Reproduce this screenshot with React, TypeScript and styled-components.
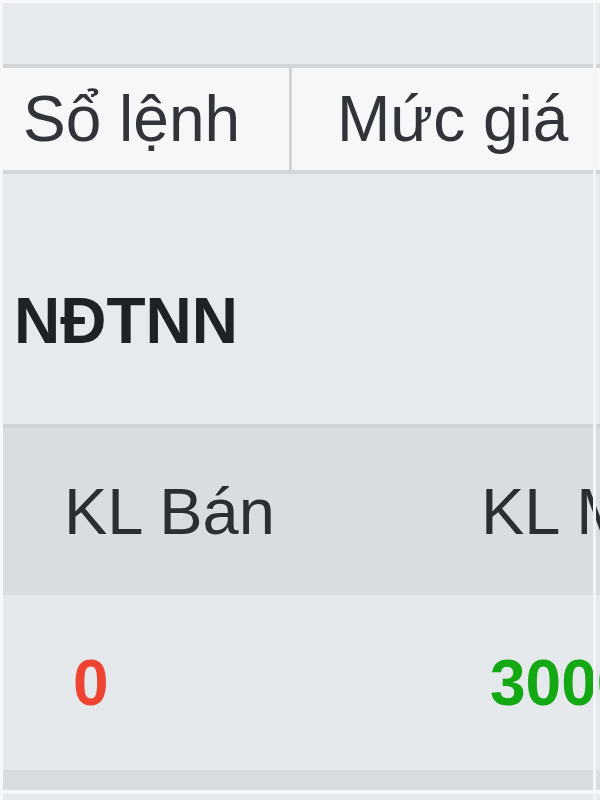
import styled, { createGlobalStyle } from "styled-components";

const GlobalStyle = createGlobalStyle`
  html, body {
    margin: 0;
    padding: 0;
    background: #e7eaec;
    overflow: hidden;
  }
  body {
    font-family: "Liberation Sans", Arial, sans-serif;
  }
`;

const Frame = styled.div`
  position: relative;
  box-sizing: border-box;
  width: 600px;
  height: 800px;
  overflow: hidden;
  border-top: 3px solid #f7f8f9;
  border-left: 3px solid #f7f8f9;
  background: #e7eaec;
  display: flex;
  flex-direction: column;
`;

const TopBand = styled.div`
  height: 61px;
  flex: none;
  background: #e7eaec;
`;

const Tabs = styled.nav`
  display: flex;
  height: 102px;
  flex: none;
  border-top: 4px solid #d3d6d9;
  border-bottom: 4px solid #d3d6d9;
  background: #f6f7f8;
`;

interface TabProps {
  readonly $width?: number;
  readonly $pad: number;
  readonly $divider?: boolean;
}

const Tab = styled.div<TabProps>`
  display: flex;
  align-items: center;
  box-sizing: border-box;
  flex: ${(p) => (p.$width ? "none" : "1")};
  width: ${(p) => (p.$width ? `${p.$width}px` : "auto")};
  padding-left: ${(p) => p.$pad}px;
  border-left: ${(p) => (p.$divider ? "3px solid #d2d5d8" : "none")};
  font-size: 64px;
  line-height: 74px;
  color: #313439;
  white-space: nowrap;
`;

const Section = styled.div`
  box-sizing: border-box;
  height: 250px;
  flex: none;
  padding: 110px 0 0 11px;
  background: #e7eaec;
`;

const Title = styled.h2`
  margin: 0;
  font-size: 64px;
  line-height: 74px;
  font-weight: 700;
  color: #1e2226;
`;

const Table = styled.div`
  flex: none;
  border-top: 4px solid #cfd3d6;
`;

interface RowProps {
  readonly $height: number;
  readonly $bg: string;
}

const Row = styled.div<RowProps>`
  display: grid;
  grid-template-columns: 417px 1fr;
  height: ${(p) => p.$height}px;
  background: ${(p) => p.$bg};
  white-space: nowrap;
`;

const HeadCell = styled.div`
  display: flex;
  align-items: center;
  padding-left: 61px;
  font-size: 65px;
  line-height: 74px;
  color: #2b2e33;
`;

const ValueCell = styled.div<{ $color: string }>`
  display: flex;
  align-items: center;
  padding-left: 70px;
  font-size: 64px;
  line-height: 74px;
  font-weight: 700;
  color: ${(p) => p.$color};
`;

const FootBand = styled.div`
  height: 20px;
  background: #d9dde0;
  border-bottom: 4px solid #f5f6f7;
`;

const EdgeLine = styled.div`
  position: absolute;
  top: 0;
  bottom: 0;
  left: 590px;
  width: 3px;
  background: #f3f4f5;
`;

export default function App() {
  return (
    <>
      <GlobalStyle />
      <Frame>
        <TopBand />
        <Tabs>
          <Tab $width={286} $pad={20}>Sổ lệnh</Tab>
          <Tab $pad={45} $divider>Mức giá</Tab>
        </Tabs>
        <Section>
          <Title>NĐTNN</Title>
        </Section>
        <Table>
          <Row $height={167} $bg="#d9dde0">
            <HeadCell>KL Bán</HeadCell>
            <HeadCell>KL Mua</HeadCell>
          </Row>
          <Row $height={175} $bg="#e5e9eb">
            <ValueCell $color="#ee4431">0</ValueCell>
            <ValueCell $color="#14a914">3000</ValueCell>
          </Row>
          <FootBand />
        </Table>
        <EdgeLine />
      </Frame>
    </>
  );
}
